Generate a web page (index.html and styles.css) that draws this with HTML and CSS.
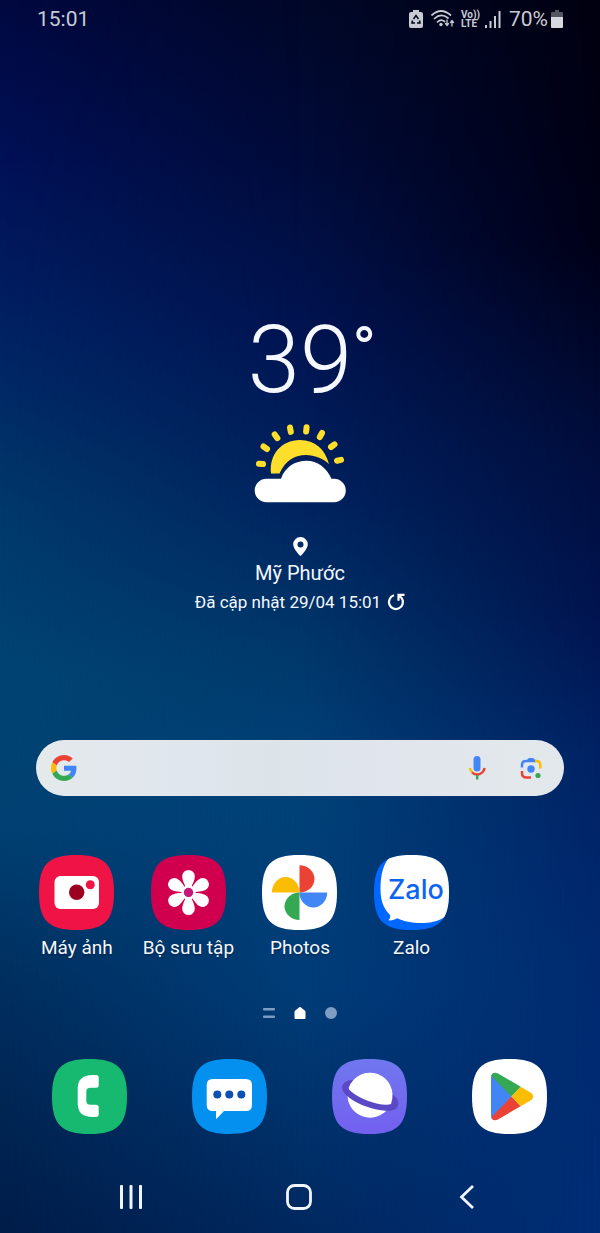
FILE: index.html
```html
<!DOCTYPE html>
<html lang="vi">
  <head>
    <meta charset="UTF-8" />
    <meta name="viewport" content="width=device-width, initial-scale=1.0" />
    <title>Home</title>
    <link rel="stylesheet" href="styles.css">
  </head>
  <body>
    <div class="screen">
      <header class="status">
        <span class="time">15:01</span>
        <div class="status-icons">
          <svg width="14" height="18" viewBox="0 0 14 18">
            <path d="M4 0h6v2h2a2 2 0 0 1 2 2v12a2 2 0 0 1-2 2H2a2 2 0 0 1-2-2V4a2 2 0 0 1 2-2h2z" fill="#c9cbd4" />
            <path d="M4.500 9L7 5.500 9.500 9M3.500 10.500L3 13h3M10.500 10.500L11 13H8" fill="none" stroke="#05061c" stroke-width="1.500" />
          </svg>
          <svg class="wifi" width="24" height="18" viewBox="0 0 24 18">
            <g fill="none" stroke="#c9cbd4" stroke-width="1.700" stroke-linecap="round">
              <path d="M1 5Q10-3 19.500 5M3.500 8.500Q10 2.500 17 8M6.500 12Q10 8.500 13.500 11.500" />
              <path d="M16 10v5M14.500 13.500L16 15.500l1.500-2M21 16v-5M19.500 12.500L21 10.500l1.500 2" stroke-width="1.300" />
            </g>
            <circle cx="10" cy="14.500" r="1.700" fill="#c9cbd4" />
          </svg>
          <span class="volte"><span>Vo))</span><span>LTE</span></span>
          <svg class="signal" width="16" height="17" viewBox="0 0 16 17" fill="#c9cbd4">
            <rect y="14" width="2" height="3" />
            <rect x="4.500" y="10" width="2" height="7" />
            <rect x="9" y="5" width="2" height="12" />
            <rect x="13.500" y="0" width="2" height="17" />
          </svg>
          <span class="percent">70%</span>
          <svg width="12" height="18" viewBox="0 0 12 18">
            <path d="M4 0h4v2h3a1 1 0 0 1 1 1v4H0V3a1 1 0 0 1 1-1h3z" fill="#555664" />
            <path d="M0 7h12v10a1 1 0 0 1-1 1H1a1 1 0 0 1-1-1z" fill="#d6d7df" />
          </svg>
        </div>
      </header>

      <main>
        <section class="weather">
          <div class="temp">39<span class="degree">°</span></div>
          <svg class="weather-icon" width="92" height="79" viewBox="0 0 92 79">
            <path d="M17 49.500C15 31 27 16 46 16c15 0 25 9 29 24C62 28 36 25 25.500 49.500z" fill="#ffdf2b" />
            <g stroke="#ffdf2b" stroke-width="6" stroke-linecap="round">
              <path d="M5 39.700l4 .4M9.500 22.500l3.500 2.500M20.700 10.500l2.700 3.700M36 3.500l.8 4.400M52.600 3.200l-.5 4.400M68 9l-2.200 4M80.500 20.300l-3.500 2.700M87 35.900l-4 .8" />
            </g>
            <path d="M12.500 54.700H27C31 43 41 36.700 52.500 36.700c11 0 20 6.800 25 18h2.500a11.800 11.800 0 0 1 0 23.600H12.500a11.800 11.800 0 0 1 0-23.600z" fill="#fff" />
          </svg>
          <svg class="pin" width="15" height="19" viewBox="0 0 15 19">
            <path d="M7.500 0A7.300 7.300 0 0 0 .2 7.400C.2 12 7.500 19 7.500 19s7.300-7 7.300-11.600A7.300 7.300 0 0 0 7.500 0zm0 4.500a3 3 0 1 1 0 6 3 3 0 0 1 0-6z" fill="#fff" fill-rule="evenodd" />
          </svg>
          <h1 class="city">Mỹ Phước</h1>
          <div class="updated">
            <span>Đã cập nhật 29/04 15:01</span>
            <button class="refresh" aria-label="Làm mới">
              <svg width="18" height="18" viewBox="0 0 18 18" fill="none" stroke="#fff" stroke-width="2.200">
                <path d="M7 2.300A7 7 0 1 0 15 5.500" />
                <path d="M17.500 1.800h-6v6M11.500 2l3.800 3.800" />
              </svg>
            </button>
          </div>
        </section>

        <form class="search">
          <svg width="26" height="26" viewBox="0 0 48 48">
            <path fill="#ea4335" d="M24 9.500c3.540 0 6.710 1.220 9.210 3.600l6.850-6.850C35.900 2.380 30.470 0 24 0 14.620 0 6.510 5.380 2.560 13.220l7.980 6.190C12.430 13.720 17.740 9.500 24 9.500z" />
            <path fill="#4285f4" d="M46.980 24.550c0-1.570-.15-3.090-.38-4.550H24v9.020h12.940c-.58 2.960-2.260 5.480-4.780 7.180l7.730 6c4.510-4.180 7.090-10.360 7.090-17.650z" />
            <path fill="#fbbc05" d="M10.530 28.590A14.500 14.500 0 0 1 9.770 24c0-1.600.27-3.140.76-4.590l-7.980-6.190A23.900 23.900 0 0 0 0 24c0 3.880.92 7.540 2.560 10.780z" />
            <path fill="#34a853" d="M24 48c6.480 0 11.930-2.130 15.890-5.810l-7.730-6c-2.150 1.450-4.920 2.300-8.160 2.300-6.260 0-11.570-4.220-13.470-9.910l-7.980 6.190C6.510 42.620 14.620 48 24 48z" />
          </svg>
          <input class="search-input" type="text" aria-label="Tìm kiếm" />
          <button type="button" aria-label="Tìm bằng giọng nói">
            <svg width="18" height="24" viewBox="0 0 18 24">
              <rect x="5.500" y="0" width="7" height="15.500" rx="3.500" fill="#4285f4" />
              <g fill="none" stroke-width="2.400">
                <path d="M2 12q.3 2.500 2.300 4.500" stroke="#fbbc05" />
                <path d="M4 16.300q5 4.500 10.300 0 2-2 2.300-4.300" stroke="#ea4335" />
                <path d="M9.200 19v4.500" stroke="#34a853" />
              </g>
            </svg>
          </button>
          <button type="button" aria-label="Google Lens">
            <svg width="22" height="22" viewBox="0 0 22 22">
              <g fill="none" stroke-width="2.500">
                <path d="M2 10.500V8q0-4 4-4h10" stroke="#4285f4" />
                <path d="M15 4h1q4.300 0 4.300 4v3.500" stroke="#fbbc05" />
                <path d="M2 14v2q0 4.500 4.500 4.500H11" stroke="#ea4335" />
              </g>
              <path d="M7 4q.5-3 2.500-3h3q2 0 2.500 3z" fill="#4285f4" />
              <circle cx="11" cy="12" r="3.700" fill="#4285f4" />
              <circle cx="18" cy="18.500" r="2.600" fill="#34a853" />
            </svg>
          </button>
        </form>

        <section class="apps">
          <button class="app">
            <svg class="app-icon" viewBox="0 0 75 75">
              <path d="M37.500 0C65.500 0 75 9.500 75 37.500S65.500 75 37.500 75 0 65.500 0 37.500 9.500 0 37.500 0z" fill="#f01446" />
              <rect x="15.500" y="21" width="44.500" height="33" rx="6" fill="#fff" />
              <circle cx="37.700" cy="37.300" r="7.700" fill="#9b0020" />
              <circle cx="51.300" cy="29.700" r="4.500" fill="#f01446" />
            </svg>
            <span>Máy ảnh</span>
          </button>
          <button class="app">
            <svg class="app-icon" viewBox="0 0 75 75">
              <defs>
                <path id="petal" d="M35.500 35C34 29 31.200 26 31.200 21.200a6.300 6.300 0 0 1 12.600 0C43.800 26 41 29 39.500 35z" />
              </defs>
              <path d="M37.500 0C65.500 0 75 9.500 75 37.500S65.500 75 37.500 75 0 65.500 0 37.500 9.500 0 37.500 0z" fill="#d1004f" />
              <g fill="#fff">
                <use href="#petal" />
                <use href="#petal" transform="rotate(60 37.500 37.500)" />
                <use href="#petal" transform="rotate(120 37.500 37.500)" />
                <use href="#petal" transform="rotate(180 37.500 37.500)" />
                <use href="#petal" transform="rotate(240 37.500 37.500)" />
                <use href="#petal" transform="rotate(300 37.500 37.500)" />
                <circle cx="37.500" cy="37.500" r="7" />
              </g>
              <circle cx="37.500" cy="37.500" r="4.700" fill="#c5187a" />
            </svg>
            <span>Bộ sưu tập</span>
          </button>
          <button class="app">
            <svg class="app-icon" viewBox="0 0 75 75">
              <path d="M37.500 0C65.500 0 75 9.500 75 37.500S65.500 75 37.500 75 0 65.500 0 37.500 9.500 0 37.500 0z" fill="#fff" />
              <path d="M37.500 10.200c8 0 15 6 15 13.700s-7 13.600-15 13.600z" fill="#ea4335" />
              <path d="M9.800 37.500c0-8 6-15.500 13.900-15.500s13.800 7.500 13.800 15.500z" fill="#fbbc04" />
              <path d="M37.500 65c-8 0-15-6-15-13.700s7-13.800 15-13.800z" fill="#34a853" />
              <path d="M65.200 37.500c0 8-6 15-13.900 15s-13.800-7-13.800-15z" fill="#4285f4" />
            </svg>
            <span>Photos</span>
          </button>
          <button class="app">
            <svg class="app-icon" viewBox="0 0 75 75">
              <defs>
                <clipPath id="squircle">
                  <path d="M37.500 0C65.500 0 75 9.500 75 37.500S65.500 75 37.500 75 0 65.500 0 37.500 9.500 0 37.500 0z" />
                </clipPath>
              </defs>
              <g clip-path="url(#squircle)">
                <rect width="75" height="75" fill="#0068ff" />
                <path d="M17 0C9 9 6.500 20 6.500 34c0 11 2.500 19 9.500 26 .6 2-.2 4-1.800 5.300 3 .5 6-.2 8.800-2C36 69.500 58 70 69 63l6-4V0z" fill="#fff" />
              </g>
              <text class="zalo-text" x="14" y="44">Zalo</text>
            </svg>
            <span>Zalo</span>
          </button>
        </section>

        <div class="pages">
          <svg width="12" height="12" viewBox="0 0 12 12" fill="#7f9cc3">
            <rect y="1" width="12" height="2.600" rx="1" />
            <rect y="8.500" width="12" height="2.600" rx="1" />
          </svg>
          <svg width="12" height="12" viewBox="0 0 12 12">
            <path d="M5.200.3q.8-.6 1.600 0L11 3.800q.5.500.5 1.200V11q0 1-1 1h-9q-1 0-1-1V5q0-.7.5-1.200z" fill="#fff" />
          </svg>
          <svg width="12" height="12" viewBox="0 0 12 12">
            <circle cx="6" cy="6" r="6" fill="#7f9cc3" />
          </svg>
        </div>
      </main>

      <section class="dock">
        <button class="app" aria-label="Điện thoại">
          <svg class="app-icon" viewBox="0 0 75 75">
            <path d="M37.500 0C65.500 0 75 9.500 75 37.500S65.500 75 37.500 75 0 65.500 0 37.500 9.500 0 37.500 0z" fill="#17b870" />
            <path d="M41 16h3q2.700 0 2.700 2.700v7.600q0 2.500-2.700 2.500h-5.500q-4.200 0-4.200 4v9q0 4 4.200 4H44q2.700 0 2.700 2.500v7q0 2.700-2.700 2.700h-3C30 58 25.700 53 25.700 44V30C25.700 21 30 16 41 16z" fill="#fff" />
          </svg>
        </button>
        <button class="app" aria-label="Tin nhắn">
          <svg class="app-icon" viewBox="0 0 75 75">
            <path d="M37.500 0C65.500 0 75 9.500 75 37.500S65.500 75 37.500 75 0 65.500 0 37.500 9.500 0 37.500 0z" fill="#0490ee" />
            <path d="M20.700 20H54q6 0 6 6v20q0 6-6 6H32l-7.200 7.600q-.8.500-.8-.5V52h-3.300q-6 0-6-6V26q0-6 6-6z" fill="#fff" />
            <g fill="#0c50b4">
              <circle cx="25.300" cy="35.500" r="4" />
              <circle cx="37.300" cy="35.500" r="4" />
              <circle cx="49.300" cy="35.500" r="4" />
            </g>
          </svg>
        </button>
        <button class="app" aria-label="Internet">
          <svg class="app-icon" viewBox="0 0 75 75">
            <defs>
              <linearGradient id="violet" x1="0" y1="0" x2="0" y2="1">
                <stop offset="0" stop-color="#7077ee" />
                <stop offset="1" stop-color="#7360f0" />
              </linearGradient>
            </defs>
            <path d="M37.500 0C65.500 0 75 9.500 75 37.500S65.500 75 37.500 75 0 65.500 0 37.500 9.500 0 37.500 0z" fill="url(#violet)" />
            <g transform="rotate(20 38.300 36.300)" fill="none" stroke="#5a48c4" stroke-width="6">
              <ellipse cx="38.300" cy="36.300" rx="26.500" ry="9" />
              <circle cx="38" cy="36.300" r="22.500" fill="#fff" stroke="none" />
              <path d="M11.800 36.300a26.500 9 0 0 0 53 0" />
            </g>
          </svg>
        </button>
        <button class="app" aria-label="Google Play">
          <svg class="app-icon" viewBox="0 0 75 75">
            <defs>
              <clipPath id="play">
                <path d="M19 18.500c0-4 3.500-6 7-4L58.500 33.400c3.500 2 3.500 6 0 8L26 60.500c-3.500 2-7 0-7-4z" />
              </clipPath>
            </defs>
            <path d="M37.500 0C65.500 0 75 9.500 75 37.500S65.500 75 37.500 75 0 65.500 0 37.500 9.500 0 37.500 0z" fill="#fff" />
            <g clip-path="url(#play)">
              <path d="M19 10v55L39.500 37.500z" fill="#4285f4" />
              <path d="M19 10v6.500l20.500 21L55 21z" fill="#34a853" />
              <path d="M19 65v-6.500l20.500-21L55 54z" fill="#ea4335" />
              <path d="M39.500 37.500L55 21l10 16.500L55 54z" fill="#fbbc04" />
            </g>
          </svg>
        </button>
      </section>

      <nav class="nav">
        <button aria-label="Gần đây">
          <svg width="26" height="26" viewBox="0 0 26 26" fill="#f0f5ff">
            <rect x="2" y="1" width="3" height="24" rx="1" />
            <rect x="11.500" y="1" width="3" height="24" rx="1" />
            <rect x="21" y="1" width="3" height="24" rx="1" />
          </svg>
        </button>
        <button aria-label="Màn hình chính">
          <svg width="26" height="26" viewBox="0 0 26 26" fill="none" stroke="#f0f5ff" stroke-width="2.800">
            <rect x="1.500" y="1.500" width="23" height="23" rx="7" />
          </svg>
        </button>
        <button aria-label="Quay lại">
          <svg width="26" height="26" viewBox="0 0 26 26" fill="none" stroke="#f0f5ff" stroke-width="2.800">
            <path d="M19 2L7.500 13 19 24" />
          </svg>
        </button>
      </nav>
    </div>
  </body>
</html>
```

FILE: styles.css
```css
* {
  margin: 0;
  padding: 0;
  box-sizing: border-box;
}

body {
  font-family: Roboto, "Noto Sans", sans-serif;
  color: #f5f8ff;
}

button {
  background: none;
  border: none;
  color: inherit;
  font: inherit;
  cursor: pointer;
}

svg {
  display: block;
}

/* wallpaper: right, middle and left colour columns faded into each other */
.screen {
  position: relative;
  isolation: isolate;
  min-height: 100vh;
  display: flex;
  flex-direction: column;
  background: linear-gradient(#010110, #010118 20%, #000d3c 36%, #001450 50%, #002264 61%, #002a70 78%, #002d76 100%);
}

.screen::before,
.screen::after {
  content: "";
  position: absolute;
  inset: 0;
  z-index: -1;
}

.screen::before {
  background: linear-gradient(#000728, #000b3a 13%, #001452 27%, #002460 41%, #00376a 52%, #004278 63%, #003d78 80%, #00285f 100%);
  mask-image: linear-gradient(to right, #000 50%, transparent);
}

.screen::after {
  background: linear-gradient(#000840, #001056 13%, #002262 27%, #00386a 41%, #004472 55%, #004072 67%, #002e5e 80%, #001c48 100%);
  mask-image: linear-gradient(to right, #000, transparent 50%);
}

.status {
  display: flex;
  justify-content: space-between;
  align-items: center;
  height: 38px;
  padding: 0 37px;
  font-size: 21px;
  color: #c9cbd4;
}

.status-icons {
  display: flex;
  align-items: center;
}

.wifi {
  margin-left: 8px;
}

.volte {
  display: flex;
  flex-direction: column;
  margin-left: 6px;
  font-size: 10px;
  line-height: 9px;
  font-weight: 700;
}

.signal {
  margin: 0 8px 0 5px;
}

.percent {
  margin-right: 3px;
}

main {
  flex: 1;
}

.weather {
  display: flex;
  flex-direction: column;
  align-items: center;
  margin-top: 273px;
}

.temp {
  position: relative;
  font-size: 94px;
  line-height: 98px;
  font-weight: 300;
}

.degree {
  position: absolute;
  left: 100%;
  top: 4px;
  font-size: 64px;
  line-height: 72px;
  font-weight: 400;
}

.weather-icon {
  margin-top: 15px;
}

.pin {
  margin-top: 34px;
}

.city {
  margin-top: 4px;
  font-size: 20px;
  line-height: 26px;
  font-weight: 400;
}

.updated {
  display: flex;
  align-items: center;
  gap: 6px;
  margin-top: 4px;
  font-size: 17px;
  line-height: 24px;
}

.search {
  display: flex;
  align-items: center;
  height: 56px;
  margin: 126px 36px 0;
  padding: 0 15px;
  gap: 20px;
  border-radius: 28px;
  background: linear-gradient(to right, #e4e9ec, #dfe6ed 30%, #dce4e9 45%, #e0e5ed 60%, #e3e8ec);
}

.search button {
  padding: 0 7px;
}

.search-input {
  flex: 1;
  min-width: 0;
  height: 40px;
  border: none;
  outline: none;
  background: transparent;
  font: inherit;
}

.apps {
  display: grid;
  grid-template-columns: repeat(5, 1fr);
  margin-top: 59px;
  padding: 0 21px;
}

.app {
  display: flex;
  flex-direction: column;
  align-items: center;
  gap: 6px;
  font-size: 19px;
  line-height: 24px;
  white-space: nowrap;
  text-shadow: 0 1px 2px rgba(0, 0, 0, 0.4);
}

.app-icon {
  width: 75px;
  height: 75px;
}

.zalo-text {
  font-family: Inter, sans-serif;
  font-size: 27px;
  font-weight: 500;
  fill: #0d64f0;
  text-shadow: none;
}

.pages {
  display: flex;
  justify-content: center;
  gap: 19px;
  margin-top: 47px;
}

.dock {
  display: grid;
  grid-template-columns: repeat(4, 1fr);
  margin-top: 40px;
  padding: 0 21px 0 19px;
}

.nav {
  display: grid;
  grid-template-columns: repeat(3, 1fr);
  justify-items: center;
  padding: 50px 49px 23px 47px;
}
```
